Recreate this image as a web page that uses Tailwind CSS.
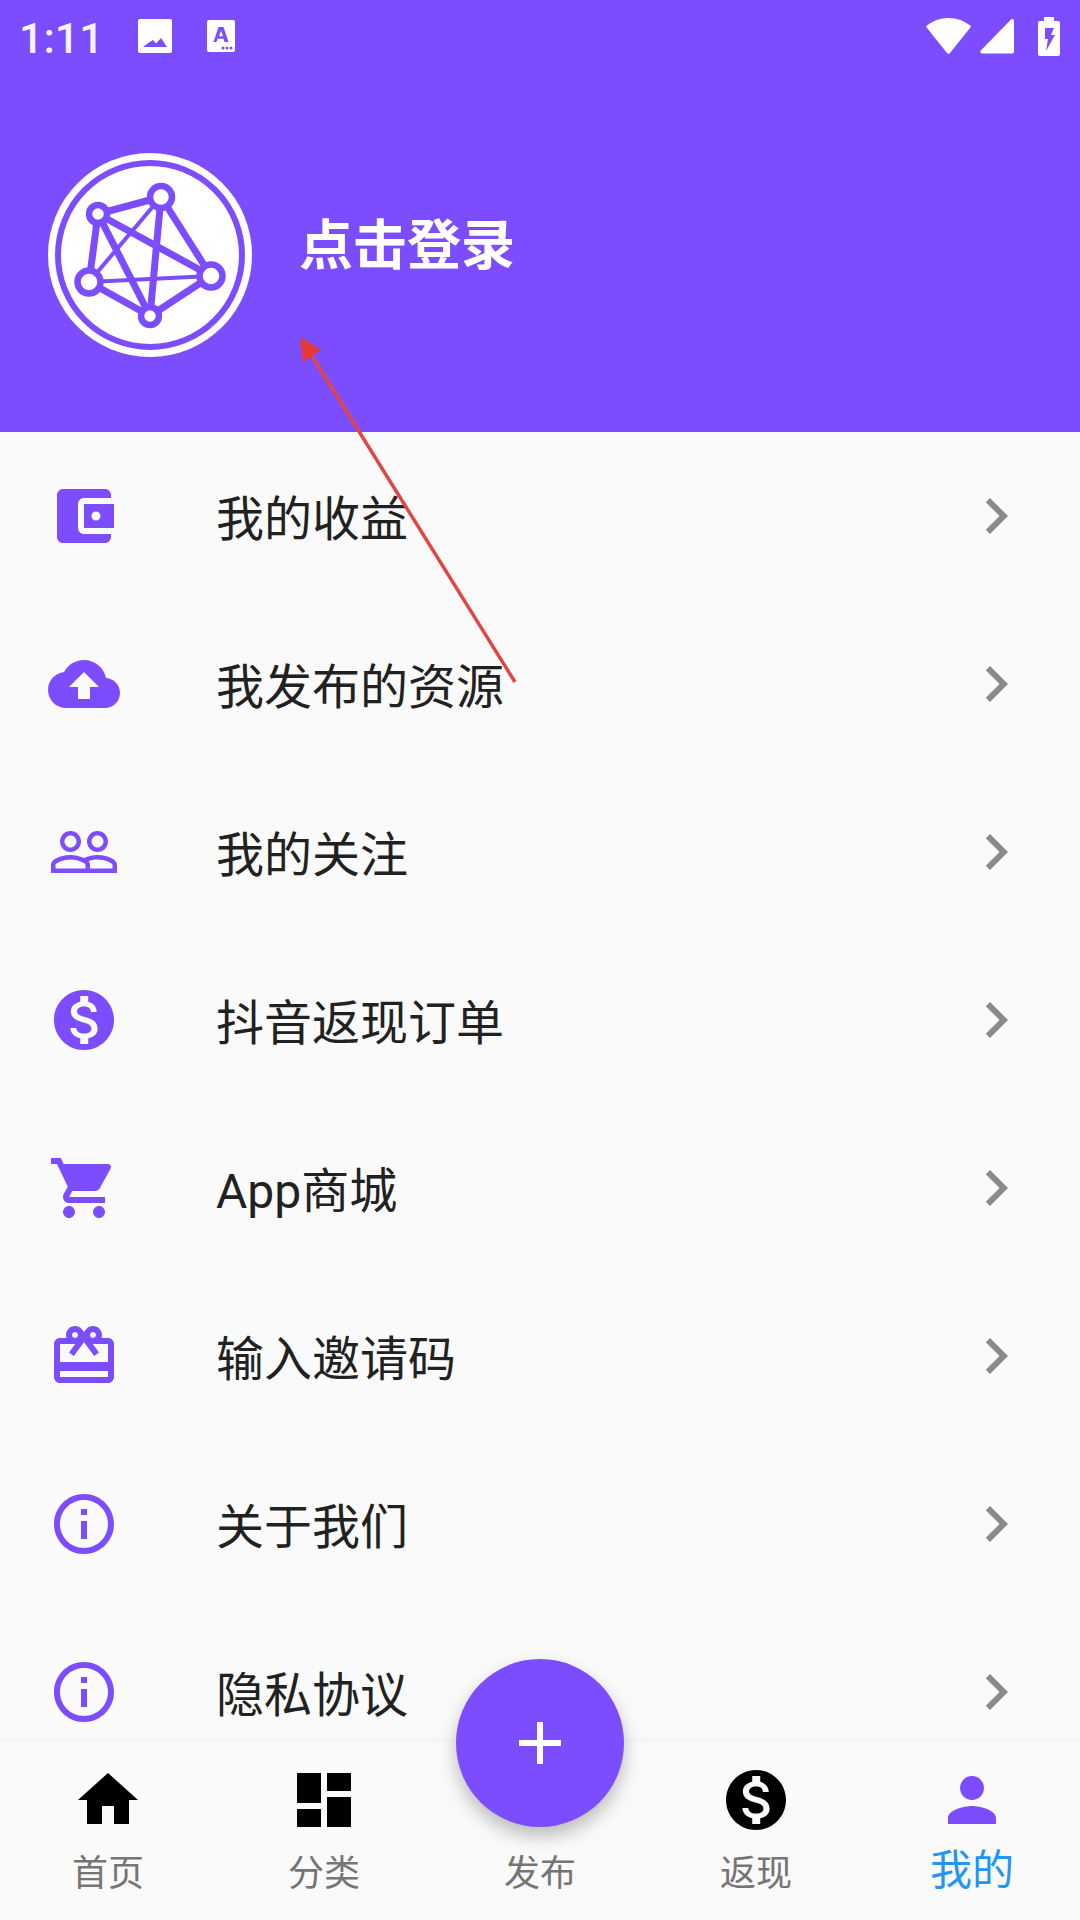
<!DOCTYPE html>
<html lang="zh-CN">
<head>
    <meta charset="UTF-8">
    <meta name="viewport" content="width=device-width, initial-scale=1.0">
    <title>我的</title>
    <script src="https://cdn.jsdelivr.net/npm/@tailwindcss/browser@4"></script>
</head>
<body class="font-['Roboto','Noto_Sans_CJK_SC',sans-serif]">
    <main class="relative flex flex-col w-[1080px] h-[1920px] overflow-hidden bg-[#fafafa]">

        <!-- header -->
        <header class="h-[432px] shrink-0 bg-[#7c4dff] text-white">
            <div class="relative flex items-center h-[72px] pl-[19px] pr-[20px]">
                <span class="w-[119px] pt-[4px] text-[43px] leading-none font-medium text-white/95">1:11</span>
                <svg class="w-[34px] h-[34px]" viewBox="0 0 34 34"><path fill="#fff" fill-rule="evenodd" d="M2 0h30a2 2 0 0 1 2 2v30a2 2 0 0 1-2 2H2a2 2 0 0 1-2-2V2a2 2 0 0 1 2-2zM5 28h24l-6-9-5 5.500-3-3.500-4 2.500z"/></svg>
                <svg class="w-[28px] h-[32px] ml-[35px]" viewBox="0 0 28 32"><path fill="#fff" d="M2 0h24a2 2 0 0 1 2 2v28a2 2 0 0 1-2 2H2a2 2 0 0 1-2-2V2a2 2 0 0 1 2-2z"/><path fill="#7c4dff" fill-rule="evenodd" d="M11.500 7h5l5 15h-4l-1-3.200h-6l-1 3.200H6.500zm2.500 3.800-2 5.400h4z"/><circle cx="16" cy="28" r="1.500" fill="#7c4dff"/><circle cx="20" cy="28" r="1.500" fill="#7c4dff"/><circle cx="24" cy="28" r="1.500" fill="#7c4dff"/></svg>
                <div class="flex items-center ml-auto gap-[9px]">
                    <svg class="w-[45px] h-[36px]" viewBox="0 0 45 36"><path fill="#fff" d="M22.500 0C14 0 6.500 3 .8 7.500a1.500 1.500 0 0 0-.2 2.100L21 35a2 2 0 0 0 3 0L44.400 9.600a1.500 1.500 0 0 0-.2-2.100C38.500 3 31 0 22.500 0z"/></svg>
                    <svg class="w-[34px] h-[35px]" viewBox="0 0 34 35"><path fill="#fff" d="M31 .6 .8 31.500c-1 1-.4 3 1 3H32a2 2 0 0 0 2-2V2c0-1.800-1.800-2.500-3-1.400z"/></svg>
                    <svg class="w-[22px] h-[39px] ml-[15px]" viewBox="0 0 22 39"><path fill="#fff" d="M6 0h10v4h4a2 2 0 0 1 2 2v31a2 2 0 0 1-2 2H2a2 2 0 0 1-2-2V6a2 2 0 0 1 2-2h4z"/><path fill="#7c4dff" d="M7 11h9l-3 7h4L8 34l2-12H7z"/></svg>
                </div>
            </div>
            <div class="flex items-center pt-[81px] pl-[48px] gap-[47px]">
                <!-- logo -->
                <svg class="w-[204px] h-[204px] shrink-0" viewBox="0 0 204 204">
                    <circle cx="102" cy="102" r="102" fill="#fff"/>
                    <circle cx="102" cy="102" r="92" fill="none" stroke="#7c4dff" stroke-width="6"/>
                    <g stroke="#7c4dff" fill="none" stroke-linecap="round">
                        <g stroke-width="7">
                            <path d="M113 44 50 61"/>
                            <path d="M50 61 41 129"/>
                            <path d="M50 61 163 123"/>
                            <path d="M50 61 102 163"/>
                            <path d="M113 44 163 123"/>
                            <path d="M113 44 102 163"/>
                            <path d="M41 129 102 163"/>
                            <path d="M163 123 102 163"/>
                        </g>
                        <g stroke-width="4">
                            <path d="M113 44 41 129"/>
                            <path d="M41 129 163 123"/>
                        </g>
                    </g>
                    <g fill="#fff" stroke="#7c4dff" stroke-width="6.500">
                        <circle cx="113" cy="44" r="11"/>
                        <circle cx="50" cy="61" r="9"/>
                        <circle cx="41" cy="129" r="11.500"/>
                        <circle cx="163" cy="123" r="11.500"/>
                        <circle cx="102" cy="163" r="9"/>
                    </g>
                </svg>
                <h1 class="mb-[16px] text-[54px] leading-none font-bold">点击登录</h1>
            </div>
        </header>

        <!-- menu list -->
        <ul class="flex-1 min-h-0 overflow-hidden text-[48px] leading-none text-[#212121]">
            <li class="flex items-center h-[168px] pl-[48px] pr-[48px]">
                <svg class="w-[72px] h-[72px] fill-[#7c4dff]" viewBox="0 0 24 24"><path d="M21 18v1c0 1.100-.9 2-2 2H5c-1.110 0-2-.9-2-2V5c0-1.100.89-2 2-2h14c1.100 0 2 .9 2 2v1h-9c-1.110 0-2 .9-2 2v8c0 1.100.89 2 2 2h9zm-9-2h10V8H12v8zm4-2.500c-.83 0-1.500-.67-1.500-1.500s.67-1.500 1.500-1.500 1.500.67 1.500 1.500-.67 1.500-1.500 1.500z"/></svg>
                <span class="flex-1 ml-[96px] pt-[8px]">我的收益</span>
                <svg class="w-[72px] h-[72px] fill-[#8a8a8a]" viewBox="0 0 24 24"><path d="M8.590 16.590 13.170 12 8.590 7.410 10 6l6 6-6 6-1.410-1.410z"/></svg>
            </li>
            <li class="flex items-center h-[168px] pl-[48px] pr-[48px]">
                <svg class="w-[72px] h-[72px] fill-[#7c4dff]" viewBox="0 0 24 24"><path d="M19.350 10.040C18.670 6.590 15.640 4 12 4 9.110 4 6.600 5.640 5.350 8.040 2.340 8.360 0 10.910 0 14c0 3.310 2.690 6 6 6h13c2.760 0 5-2.240 5-5 0-2.640-2.050-4.780-4.650-4.960zM14 13v4h-4v-4H7l5-5 5 5h-3z"/></svg>
                <span class="flex-1 ml-[96px] pt-[8px]">我发布的资源</span>
                <svg class="w-[72px] h-[72px] fill-[#8a8a8a]" viewBox="0 0 24 24"><path d="M8.590 16.590 13.170 12 8.590 7.410 10 6l6 6-6 6-1.410-1.410z"/></svg>
            </li>
            <li class="flex items-center h-[168px] pl-[48px] pr-[48px]">
                <svg class="w-[72px] h-[72px] fill-[#7c4dff]" viewBox="0 0 24 24"><path d="M16.500 13c-1.200 0-3.070.34-4.500 1-1.430-.67-3.300-1-4.500-1C5.330 13 1 14.080 1 16.250V19h22v-2.750c0-2.170-4.330-3.250-6.500-3.250zm-4 4.500h-10v-1.250c0-.54 2.560-1.750 5-1.750s5 1.210 5 1.750v1.250zm9 0H14v-1.250c0-.46-.2-.86-.52-1.220.88-.3 1.960-.53 3.020-.53 2.440 0 5 1.210 5 1.750v1.250zM7.500 12c1.930 0 3.500-1.570 3.500-3.500S9.430 5 7.500 5 4 6.570 4 8.500 5.570 12 7.500 12zm0-5.500c1.100 0 2 .9 2 2s-.9 2-2 2-2-.9-2-2 .9-2 2-2zm9 5.500c1.930 0 3.500-1.570 3.500-3.500S18.430 5 16.500 5 13 6.570 13 8.500s1.570 3.500 3.500 3.500zm0-5.500c1.100 0 2 .9 2 2s-.9 2-2 2-2-.9-2-2 .9-2 2-2z"/></svg>
                <span class="flex-1 ml-[96px] pt-[8px]">我的关注</span>
                <svg class="w-[72px] h-[72px] fill-[#8a8a8a]" viewBox="0 0 24 24"><path d="M8.590 16.590 13.170 12 8.590 7.410 10 6l6 6-6 6-1.410-1.410z"/></svg>
            </li>
            <li class="flex items-center h-[168px] pl-[48px] pr-[48px]">
                <svg class="w-[72px] h-[72px] fill-[#7c4dff]" viewBox="0 0 24 24"><path d="M12 2C6.480 2 2 6.480 2 12s4.480 10 10 10 10-4.480 10-10S17.520 2 12 2zm1.410 16.090V20h-2.670v-1.930c-1.710-.36-3.160-1.460-3.270-3.400h1.960c.1 1.050.82 1.870 2.650 1.870 1.960 0 2.400-.98 2.400-1.590 0-.83-.44-1.610-2.670-2.140-2.480-.6-4.180-1.620-4.180-3.670 0-1.720 1.390-2.840 3.110-3.210V4h2.670v1.950c1.860.45 2.790 1.860 2.850 3.390H14.300c-.05-1.110-.64-1.870-2.220-1.870-1.500 0-2.400.68-2.400 1.640 0 .84.65 1.390 2.670 1.910s4.180 1.390 4.180 3.910c-.01 1.830-1.380 2.830-3.120 3.160z"/></svg>
                <span class="flex-1 ml-[96px] pt-[8px]">抖音返现订单</span>
                <svg class="w-[72px] h-[72px] fill-[#8a8a8a]" viewBox="0 0 24 24"><path d="M8.590 16.590 13.170 12 8.590 7.410 10 6l6 6-6 6-1.410-1.410z"/></svg>
            </li>
            <li class="flex items-center h-[168px] pl-[48px] pr-[48px]">
                <svg class="w-[72px] h-[72px] fill-[#7c4dff]" viewBox="0 0 24 24"><path d="M7 18c-1.100 0-1.990.9-1.990 2S5.900 22 7 22s2-.9 2-2-.9-2-2-2zM1 2v2h2l3.600 7.590-1.350 2.450c-.16.28-.25.61-.25.96 0 1.100.9 2 2 2h12v-2H7.420c-.14 0-.25-.11-.25-.25l.03-.12.9-1.630h7.450c.75 0 1.410-.41 1.750-1.030l3.580-6.490c.08-.14.12-.31.12-.48 0-.55-.45-1-1-1H5.210l-.94-2H1zm16 16c-1.100 0-1.990.9-1.990 2s.89 2 1.990 2 2-.9 2-2-.9-2-2-2z"/></svg>
                <span class="flex-1 ml-[96px] pt-[8px]">App商城</span>
                <svg class="w-[72px] h-[72px] fill-[#8a8a8a]" viewBox="0 0 24 24"><path d="M8.590 16.590 13.170 12 8.590 7.410 10 6l6 6-6 6-1.410-1.410z"/></svg>
            </li>
            <li class="flex items-center h-[168px] pl-[48px] pr-[48px]">
                <svg class="w-[72px] h-[72px] fill-[#7c4dff]" viewBox="0 0 24 24"><path d="M20 6h-2.180c.11-.31.18-.65.18-1 0-1.660-1.340-3-3-3-1.050 0-1.960.54-2.500 1.350l-.5.67-.5-.68C10.960 2.540 10.050 2 9 2 7.340 2 6 3.340 6 5c0 .35.07.69.18 1H4c-1.110 0-1.990.89-1.990 2L2 19c0 1.110.89 2 2 2h16c1.110 0 2-.89 2-2V8c0-1.110-.89-2-2-2zm-5-2c.55 0 1 .45 1 1s-.45 1-1 1-1-.45-1-1 .45-1 1-1zM9 4c.55 0 1 .45 1 1s-.45 1-1 1-1-.45-1-1 .45-1 1-1zm11 15H4v-2h16v2zm0-5H4V8h5.080L7 10.830 8.620 12 11 8.760l1-1.360 1 1.360L15.380 12 17 10.830 14.920 8H20v6z"/></svg>
                <span class="flex-1 ml-[96px] pt-[8px]">输入邀请码</span>
                <svg class="w-[72px] h-[72px] fill-[#8a8a8a]" viewBox="0 0 24 24"><path d="M8.590 16.590 13.170 12 8.590 7.410 10 6l6 6-6 6-1.410-1.410z"/></svg>
            </li>
            <li class="flex items-center h-[168px] pl-[48px] pr-[48px]">
                <svg class="w-[72px] h-[72px] fill-[#7c4dff]" viewBox="0 0 24 24"><path d="M11 17h2v-6h-2v6zm1-15C6.480 2 2 6.480 2 12s4.480 10 10 10 10-4.480 10-10S17.520 2 12 2zm0 18c-4.410 0-8-3.590-8-8s3.590-8 8-8 8 3.590 8 8-3.590 8-8 8zM11 9h2V7h-2v2z"/></svg>
                <span class="flex-1 ml-[96px] pt-[8px]">关于我们</span>
                <svg class="w-[72px] h-[72px] fill-[#8a8a8a]" viewBox="0 0 24 24"><path d="M8.590 16.590 13.170 12 8.590 7.410 10 6l6 6-6 6-1.410-1.410z"/></svg>
            </li>
            <li class="flex items-center h-[168px] pl-[48px] pr-[48px]">
                <svg class="w-[72px] h-[72px] fill-[#7c4dff]" viewBox="0 0 24 24"><path d="M11 17h2v-6h-2v6zm1-15C6.480 2 2 6.480 2 12s4.480 10 10 10 10-4.480 10-10S17.520 2 12 2zm0 18c-4.410 0-8-3.590-8-8s3.590-8 8-8 8 3.590 8 8-3.590 8-8 8zM11 9h2V7h-2v2z"/></svg>
                <span class="flex-1 ml-[96px] pt-[8px]">隐私协议</span>
                <svg class="w-[72px] h-[72px] fill-[#8a8a8a]" viewBox="0 0 24 24"><path d="M8.590 16.590 13.170 12 8.590 7.410 10 6l6 6-6 6-1.410-1.410z"/></svg>
            </li>
        </ul>

        <!-- bottom nav -->
        <nav class="relative grid grid-cols-5 h-[178px] shrink-0 bg-[#fafafa] shadow-[0_-2px_4px_rgba(0,0,0,0.04)] text-[36px] leading-none text-[#757575]">
            <a class="flex flex-col items-center pt-[22px]">
                <svg class="w-[72px] h-[72px]" viewBox="0 0 24 24"><path d="M10 20v-6h4v6h5v-8h3L12 3 2 12h3v8z"/></svg>
                <span class="mt-[20px]">首页</span>
            </a>
            <a class="flex flex-col items-center pt-[22px]">
                <svg class="w-[72px] h-[72px]" viewBox="0 0 24 24"><path d="M3 13h8V3H3v10zm0 8h8v-6H3v6zm10 0h8V11h-8v10zm0-18v6h8V3h-8z"/></svg>
                <span class="mt-[20px]">分类</span>
            </a>
            <a class="flex flex-col items-center pt-[94px]">
                <span class="mt-[20px]">发布</span>
            </a>
            <a class="flex flex-col items-center pt-[22px]">
                <svg class="w-[72px] h-[72px]" viewBox="0 0 24 24"><path d="M12 2C6.480 2 2 6.480 2 12s4.480 10 10 10 10-4.480 10-10S17.520 2 12 2zm1.410 16.090V20h-2.670v-1.930c-1.710-.36-3.160-1.460-3.270-3.400h1.960c.1 1.050.82 1.870 2.650 1.870 1.960 0 2.400-.98 2.400-1.590 0-.83-.44-1.610-2.670-2.140-2.480-.6-4.180-1.620-4.180-3.670 0-1.720 1.390-2.840 3.110-3.210V4h2.670v1.950c1.860.45 2.790 1.860 2.850 3.390H14.300c-.05-1.110-.64-1.870-2.220-1.870-1.500 0-2.400.68-2.400 1.640 0 .84.65 1.390 2.670 1.910s4.180 1.390 4.180 3.910c-.01 1.830-1.380 2.830-3.120 3.160z"/></svg>
                <span class="mt-[20px]">返现</span>
            </a>
            <a class="flex flex-col items-center pt-[22px] text-[#2196f3]">
                <svg class="w-[72px] h-[72px] fill-[#7c4dff]" viewBox="0 0 24 24"><path d="M12 12c2.210 0 4-1.790 4-4s-1.790-4-4-4-4 1.790-4 4 1.790 4 4 4zm0 2c-2.670 0-8 1.340-8 4v2h16v-2c0-2.660-5.330-4-8-4z"/></svg>
                <span class="mt-[14px] text-[42px] leading-none">我的</span>
            </a>
        </nav>

        <!-- floating add button -->
        <button class="absolute left-[456px] top-[1659px] flex items-center justify-center w-[168px] h-[168px] rounded-full bg-[#7c4dff] shadow-[0_9px_18px_rgba(0,0,0,0.25)]">
            <svg class="w-[72px] h-[72px] fill-white" viewBox="0 0 24 24"><path d="M19 13h-6v6h-2v-6H5v-2h6V5h2v6h6v2z"/></svg>
        </button>

        <!-- red annotation arrow drawn over the screenshot -->
        <svg class="absolute left-0 top-0 w-[1080px] h-[1920px] pointer-events-none" viewBox="0 0 1080 1920">
            <path d="M515 682 312 356" stroke="#e04545" stroke-width="3.500" fill="none"/>
            <path d="M300 337 321 350 303 362z" fill="#e53935"/>
        </svg>
    </main>
</body>
</html>
